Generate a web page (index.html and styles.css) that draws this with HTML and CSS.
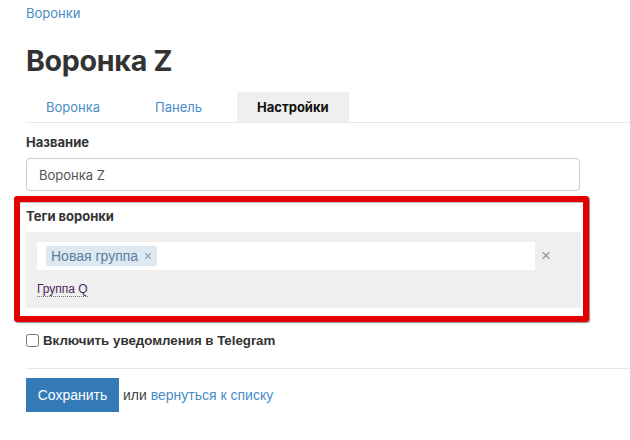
FILE: index.html
```html
<!DOCTYPE html>
<html lang="ru">
<head>
  <meta charset="UTF-8">
  <title>Воронка Z</title>
  <link rel="stylesheet" href="styles.css">
</head>
<body>
  <div class="page">
    <!-- Breadcrumb -->
    <a class="crumb" href="#">Воронки</a>

    <h1>Воронка Z</h1>

    <!-- Tabs -->
    <ul class="tabs">
      <li><a href="#">Воронка</a></li>
      <li><a href="#">Панель</a></li>
      <li class="active"><a href="#">Настройки</a></li>
    </ul>

    <form class="form">
      <div class="group">
        <label class="label">Название</label>
        <input class="input" type="text" value="Воронка Z">
      </div>

      <!-- Highlighted block -->
      <div class="marked">
        <label class="label">Теги воронки</label>
        <div class="tags-box">
          <div class="tags-row">
            <div class="tags-input">
              <span class="chip">Новая группа <span class="chip-x">×</span></span>
            </div>
            <span class="clear">×</span>
          </div>
          <a class="suggest" href="#">Группа Q</a>
        </div>
      </div>

      <label class="check">
        <input type="checkbox">
        <span>Включить уведомления в Telegram</span>
      </label>

      <hr class="line">

      <div class="actions">
        <button class="btn" type="button">Сохранить</button>
        <span class="or">или <a href="#">вернуться к списку</a></span>
      </div>
    </form>
  </div>
</body>
</html>
```

FILE: styles.css
```css
/* General page styles */
body {
  margin: 0;
  background: #fff;
  color: #333;
  font-family: "Inter", "Open Sans", sans-serif;
  font-size: 14px;
  overflow: hidden;
}

a {
  color: #4a8cc6;
  text-decoration: none;
}

.page {
  padding: 3px 0 0 26px;
}

.crumb {
  display: inline-block;
  font-size: 13px;
  line-height: 20px;
}

h1 {
  margin: 21px 0 0;
  font-size: 28.6px;
  line-height: 34px;
  font-weight: 700;
  letter-spacing: -0.3px;
  color: #333;
}

/* Tabs */
.tabs {
  display: flex;
  gap: 15px;
  list-style: none;
  margin: 14px 0 0;
  padding: 0;
  border-bottom: 1px solid #e8e8e8;
}

.tabs a {
  display: block;
  padding: 0 20px;
  line-height: 30px;
  font-size: 13px;
}

.tabs .active a {
  background: #efefef;
  color: #111;
  font-weight: 700;
}

/* Form */
.form {
  width: 555px;
}

.group {
  padding-top: 10px;
}

.label {
  display: block;
  font-size: 13px;
  font-weight: 700;
  line-height: 18px;
  color: #333;
}

.input {
  display: block;
  box-sizing: border-box;
  width: 554px;
  height: 33px;
  margin-top: 7px;
  padding: 0 12px;
  border: 1px solid #ccc;
  border-radius: 4px;
  font-family: inherit;
  font-size: 13px;
  color: #555;
}

/* Red frame round the tags block */
.marked {
  margin: 5px -8px 0 -12px;
  padding: 5px 2px 8px 6px;
  border: 6px solid #e30000;
  border-radius: 3px;
  box-shadow: 1px 1px 1px rgba(0, 0, 0, 0.45), inset 0 1px 0 rgba(0, 0, 0, 0.25);
}

.tags-box {
  margin-top: 7px;
  padding: 10px 0 11px 11px;
  background: #efefef;
}

.tags-row {
  display: flex;
  align-items: center;
}

.tags-input {
  display: flex;
  align-items: center;
  width: 498px;
  height: 28px;
  padding-left: 9px;
  box-sizing: border-box;
  background: #fff;
}

.chip {
  padding: 0 5px;
  line-height: 20px;
  background: #dde8f1;
  border-radius: 2px;
  color: #5b7ea1;
  font-family: "Liberation Sans", Arial, sans-serif;
  font-size: 14px;
}

.chip-x {
  margin-left: 2px;
  color: #8a9aa8;
}

.clear {
  margin-left: 6px;
  color: #8e98a2;
  font-family: "Liberation Sans", Arial, sans-serif;
  font-size: 17px;
}

.suggest {
  display: inline-block;
  margin-top: 12px;
  font-family: "Liberation Sans", Arial, sans-serif;
  font-size: 12px;
  line-height: 14px;
  color: #4b2458;
  border-bottom: 1px dotted #777;
}

/* Checkbox */
.check {
  display: flex;
  align-items: center;
  gap: 4px;
  margin-top: 11px;
  font-family: "Liberation Sans", Arial, sans-serif;
  font-size: 13.3px;
  font-weight: 700;
  color: #333;
}

.check input {
  margin: 0;
  width: 13px;
  height: 13px;
}

.line {
  width: 610px;
  margin: 20px 0 9px;
  border: 0;
  border-top: 1px solid #e8e8e8;
}

.actions {
  display: flex;
  align-items: center;
  gap: 4px;
  font-family: "Liberation Sans", Arial, sans-serif;
  font-size: 14px;
}

.btn {
  width: 93px;
  height: 34px;
  border: 0;
  border-radius: 0;
  background: #337ab7;
  color: #fff;
  font-family: inherit;
  font-size: 14px;
}

.or {
  color: #444;
}
```
